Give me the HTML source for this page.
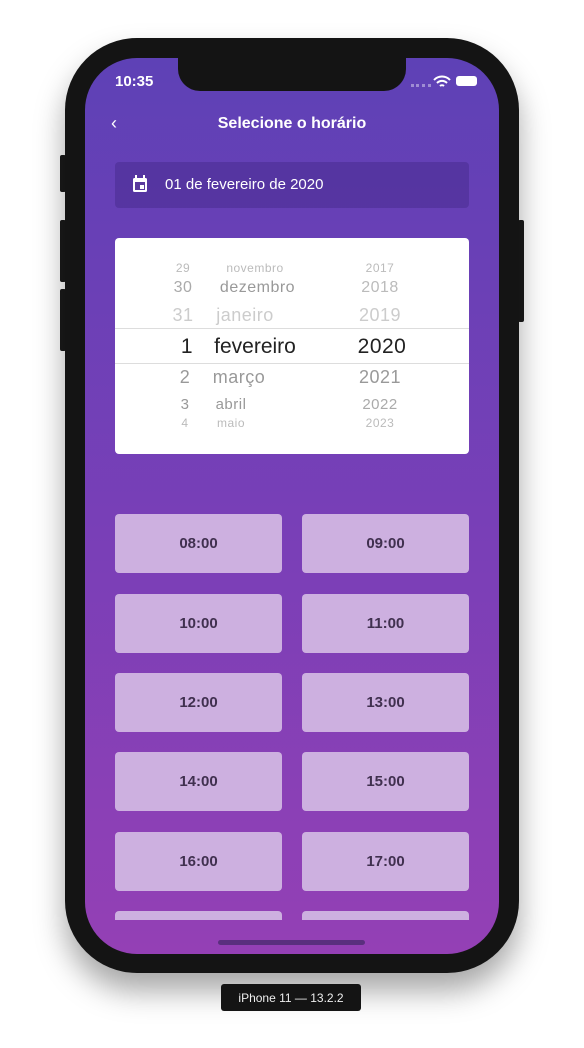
<!DOCTYPE html>
<html><head><meta charset="utf-8"><style>
body{margin:0;width:584px;height:1048px;background:#fff;position:relative;overflow:hidden;font-family:"Liberation Sans",sans-serif}
.frame{position:absolute;left:65px;top:38px;width:454px;height:935px;background:#141414;border-radius:72px;box-shadow:0 18px 30px rgba(0,0,0,.35)}
.btnside{position:absolute;background:#1a1a1a;border-radius:2px}
.screen{position:absolute;left:85px;top:58px;width:414px;height:896px;border-radius:52px;overflow:hidden;background:linear-gradient(#5e41b6,#7a3fb7 55%,#9440b5)}
.notch{position:absolute;left:93px;top:0;width:228px;height:33px;background:#141414;border-radius:0 0 22px 22px}
.abs{position:absolute}
.slot{position:absolute;width:167px;height:59px;background:#cdb0e0;border-radius:4px;color:#40304f;font-weight:bold;font-size:15px;display:flex;align-items:center;justify-content:center}
.pk{position:absolute;text-align:center;width:100px;font-family:"Liberation Sans",sans-serif;letter-spacing:0.5px}
</style></head><body>
<div class="btnside" style="left:60px;top:155px;width:6px;height:37px"></div>
<div class="btnside" style="left:60px;top:220px;width:6px;height:62px"></div>
<div class="btnside" style="left:60px;top:289px;width:6px;height:62px"></div>
<div class="btnside" style="left:518px;top:220px;width:6px;height:102px"></div>
<div class="frame"></div>
<div class="screen">
<div class="notch"></div>
<div class="abs" style="left:30px;top:15px;color:#fff;font-size:15px;font-weight:bold">10:35</div>
<div class="abs" style="left:326px;top:26px;width:20px;height:3px;border-top:3px dotted rgba(255,255,255,.4)"></div>
<svg class="abs" style="left:348px;top:17px" width="18" height="14" viewBox="0 0 18 14"><path d="M1 5a11 11 0 0 1 16 0M4 8a7 7 0 0 1 10 0M7 11a3 3 0 0 1 4 0" stroke="#fff" stroke-width="2" fill="none"/></svg>
<div class="abs" style="left:371px;top:18px;width:21px;height:10px;background:#fff;border-radius:3px"></div>
<div class="abs" style="left:26px;top:55px;color:#fff;font-size:18px">‹</div>
<div class="abs" style="left:0;width:414px;top:57px;text-align:center;color:#fff;font-size:16px;font-weight:bold">Selecione o horário</div>
<div class="abs" style="left:30px;top:104px;width:354px;height:46px;background:rgba(40,20,100,.25);border-radius:4px"></div>
<svg class="abs" style="left:47px;top:117px" width="16" height="18" viewBox="0 0 16 18"><rect x="1" y="3" width="14" height="14" rx="1.5" fill="#fff"/><rect x="3" y="7" width="10" height="8" fill="#5a3a9e"/><rect x="8" y="10" width="4" height="4" fill="#fff"/><rect x="3" y="0" width="2" height="4" fill="#fff"/><rect x="11" y="0" width="2" height="4" fill="#fff"/></svg>
<div class="abs" style="left:80px;top:118px;color:#fff;font-size:15px">01 de fevereiro de 2020</div>
<div class="abs" style="left:30px;top:180px;width:354px;height:216px;background:#fff;border-radius:4px;overflow:hidden">
 <div class="abs" style="left:0;top:90px;width:354px;height:34px;border-top:1px solid #ddd;border-bottom:1px solid #ddd"></div>
 <div class="pk" style="left:18px;top:23px;font-size:12px;color:#bbb">29</div>
 <div class="pk" style="left:80px;top:23px;width:120px;font-size:12px;color:#bbb">novembro</div>
 <div class="pk" style="left:215px;top:23px;font-size:12px;color:#bbb">2017</div>
 <div class="pk" style="left:18px;top:41px;font-size:16px;color:#aaa">30</div>
 <div class="pk" style="left:80px;top:41px;width:125px;font-size:16px;color:#999">dezembro</div>
 <div class="pk" style="left:215px;top:41px;font-size:16px;color:#bbb">2018</div>
 <div class="pk" style="left:18px;top:67px;font-size:18px;color:#ccc">31</div>
 <div class="pk" style="left:80px;top:67px;width:100px;font-size:18px;color:#ccc">janeiro</div>
 <div class="pk" style="left:215px;top:67px;font-size:18px;color:#ccc">2019</div>
 <div class="pk" style="left:22px;top:97px;font-size:21px;color:#222">1</div>
 <div class="pk" style="left:80px;top:97px;width:120px;font-size:21px;color:#222;letter-spacing:0">fevereiro</div>
 <div class="pk" style="left:217px;top:97px;font-size:21px;color:#222">2020</div>
 <div class="pk" style="left:20px;top:129px;font-size:18px;color:#999">2</div>
 <div class="pk" style="left:80px;top:129px;width:88px;font-size:18px;color:#999">março</div>
 <div class="pk" style="left:215px;top:129px;font-size:18px;color:#999">2021</div>
 <div class="pk" style="left:20px;top:158px;font-size:15px;color:#999">3</div>
 <div class="pk" style="left:80px;top:158px;width:72px;font-size:15px;color:#999">abril</div>
 <div class="pk" style="left:215px;top:158px;font-size:15px;color:#aaa">2022</div>
 <div class="pk" style="left:20px;top:178px;font-size:12px;color:#bbb">4</div>
 <div class="pk" style="left:80px;top:178px;width:72px;font-size:12px;color:#bbb">maio</div>
 <div class="pk" style="left:215px;top:178px;font-size:12px;color:#bbb">2023</div>
</div>
<div class="slot" style="left:30px;top:456px">08:00</div><div class="slot" style="left:217px;top:456px">09:00</div>
<div class="slot" style="left:30px;top:536px">10:00</div><div class="slot" style="left:217px;top:536px">11:00</div>
<div class="slot" style="left:30px;top:615px">12:00</div><div class="slot" style="left:217px;top:615px">13:00</div>
<div class="slot" style="left:30px;top:694px">14:00</div><div class="slot" style="left:217px;top:694px">15:00</div>
<div class="slot" style="left:30px;top:774px">16:00</div><div class="slot" style="left:217px;top:774px">17:00</div>
<div class="slot" style="left:30px;top:853px;height:9px;border-radius:4px 4px 0 0"></div><div class="slot" style="left:217px;top:853px;height:9px;border-radius:4px 4px 0 0"></div>
<div class="abs" style="left:133px;top:882px;width:147px;height:5px;border-radius:3px;background:#5a2f7e"></div>
</div>
<div class="abs" style="left:221px;top:984px;width:140px;height:27px;background:#141414;border-radius:3px;color:#eee;font-size:12px;display:flex;align-items:center;justify-content:center">iPhone 11 — 13.2.2</div>
</body></html>
